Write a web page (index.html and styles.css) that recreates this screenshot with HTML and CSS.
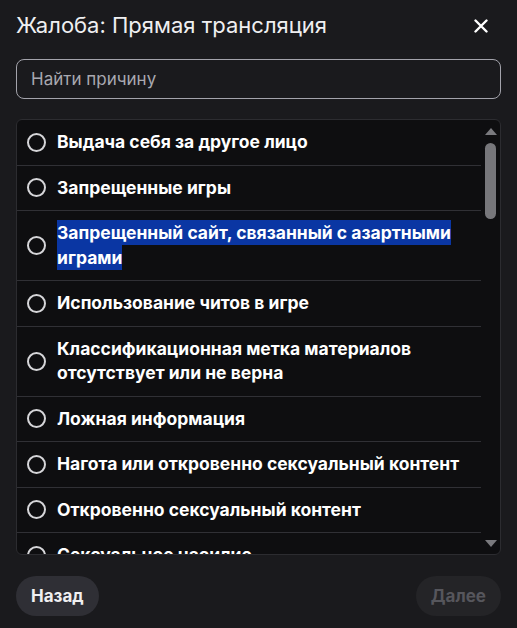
FILE: index.html
```html
<!DOCTYPE html>
<html lang="ru">
<head>
<meta charset="utf-8">
<title>Жалоба</title>
<link rel="stylesheet" href="styles.css">
</head>
<body>
<div class="modal">
  <header class="head">
    <h1 class="title">Жалоба: Прямая трансляция</h1>
    <button class="close" aria-label="Закрыть">
      <svg width="14" height="14" viewBox="0 0 14 14"><path d="M1.5 1.5 L12.5 12.5 M12.5 1.5 L1.5 12.5" stroke="#fff" stroke-width="2.4" stroke-linecap="round"/></svg>
    </button>
  </header>
  <input class="search" type="text" placeholder="Найти причину">
  <div class="listbox">
    <ul class="rows">
      <li class="row"><span class="radio"></span><span class="label">Выдача себя за другое лицо</span></li>
      <li class="row"><span class="radio"></span><span class="label">Запрещенные игры</span></li>
      <li class="row"><span class="radio"></span><span class="label"><span class="sel">Запрещенный сайт, связанный с азартными играми</span></span></li>
      <li class="row"><span class="radio"></span><span class="label">Использование читов в игре</span></li>
      <li class="row"><span class="radio"></span><span class="label">Классификационная метка материалов отсутствует или не верна</span></li>
      <li class="row"><span class="radio"></span><span class="label">Ложная информация</span></li>
      <li class="row"><span class="radio"></span><span class="label">Нагота или откровенно сексуальный контент</span></li>
      <li class="row"><span class="radio"></span><span class="label">Откровенно сексуальный контент</span></li>
      <li class="row"><span class="radio"></span><span class="label">Сексуальное насилие</span></li>
    </ul>
    <div class="scrollbar">
      <span class="arrow up"></span>
      <span class="thumb"></span>
      <span class="track"></span>
      <span class="arrow down"></span>
    </div>
  </div>
  <footer class="foot">
    <button class="btn back">Назад</button>
    <button class="btn next" disabled>Далее</button>
  </footer>
</div>
</body>
</html>
```
FILE: styles.css
```css
* { box-sizing: border-box; }
html, body { margin: 0; padding: 0; }
body {
  background: #1a1a1d;
  font-family: Inter, "Noto Sans", sans-serif;
  color: #efeff1;
  width: 517px;
  height: 628px;
  overflow: hidden;
}
.modal {
  padding: 10px 16px 0 16px;
  display: flex;
  flex-direction: column;
}
.head {
  display: flex;
  align-items: center;
  justify-content: space-between;
  height: 30px;
}
.title {
  margin: 0;
  font-size: 22px;
  font-weight: 400;
  line-height: 30px;
  color: #efeff1;
}
.close {
  background: none;
  border: 0;
  padding: 0;
  width: 14px;
  height: 14px;
  margin-right: 13px;
  margin-top: 2px;
  display: flex;
}
.search {
  margin-top: 19px;
  height: 40px;
  width: 485px;
  border: 1.5px solid #a3a3ab;
  border-radius: 8px;
  background: transparent;
  padding: 0 14px;
  font-family: Inter, "Noto Sans", sans-serif;
  font-size: 17px;
  color: #efeff1;
  outline: none;
}
.search::placeholder { color: #a8a8b0; }
.listbox {
  margin-top: 20px;
  height: 436px;
  border: 1px solid #2c2c30;
  border-radius: 6px;
  background: #0e0e10;
  display: flex;
  overflow: hidden;
}
.rows {
  list-style: none;
  margin: 0;
  padding: 0;
  flex: 1;
  overflow: hidden;
}
.row {
  display: flex;
  align-items: center;
  gap: 11px;
  padding: 10px 10px 10px 10px;
  border-bottom: 1px solid #303035;
  font-size: 17.5px;
  font-weight: 700;
  line-height: 24.5px;
  color: #ffffff;
}
.radio {
  flex: none;
  width: 19px;
  height: 19px;
  border: 2px solid #d6d6d9;
  border-radius: 50%;
}
.sel {
  background: #0a36a3;
  padding: 2px 0;
}
.scrollbar {
  width: 19px;
  flex: none;
  display: flex;
  flex-direction: column;
  align-items: center;
  padding: 8px 0 7px;
}
.arrow {
  width: 0;
  height: 0;
  border-left: 6.5px solid transparent;
  border-right: 6.5px solid transparent;
}
.arrow.up { border-bottom: 7px solid #7a7a7e; }
.arrow.down { border-top: 7px solid #7a7a7e; }
.thumb {
  margin-top: 8px;
  width: 11px;
  height: 76px;
  border-radius: 6px;
  background: #77777b;
}
.track { flex: 1; }
.foot {
  margin-top: 21px;
  display: flex;
  justify-content: space-between;
}
.btn {
  height: 40px;
  border: 0;
  border-radius: 20px;
  padding: 0 15px;
  font-family: Inter, "Noto Sans", sans-serif;
  font-size: 17px;
  font-weight: 700;
}
.back { background: #2f2f35; color: #efeff1; }
.next { background: #242427; color: #56565c; }
```
